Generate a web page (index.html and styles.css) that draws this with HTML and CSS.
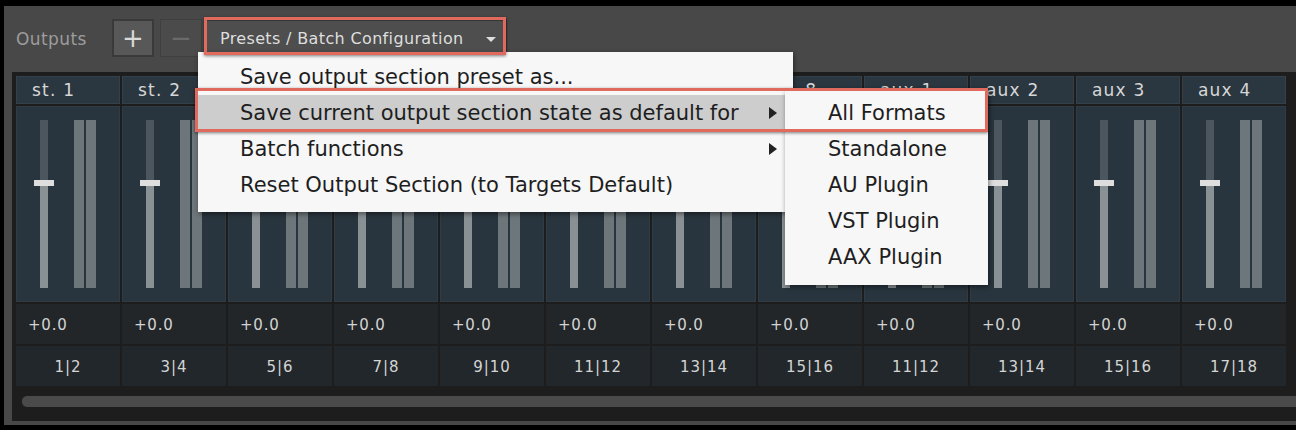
FILE: index.html
```html
<!DOCTYPE html>
<html lang="en">
<head>
    <meta charset="UTF-8">
    <meta name="viewport" content="width=device-width, initial-scale=1.0">
    <title>Outputs</title>
    <link rel="stylesheet" href="styles.css">
</head>
<body>
    <div class="window">
        <div class="panel">
            <div class="toolbar">
                <span class="toolbarLabel">Outputs</span>
                <div class="toolButton add">+</div>
                <div class="toolButton remove">&minus;</div>
                <div class="dropdown">Presets / Batch Configuration <span class="caret"></span></div>
            </div>

            <div class="mixer">
                <div class="strips">
                    <div class="strip">
                        <div class="stripName">st. 1</div>
                        <div class="stripBody">
                            <div class="fader"><div class="faderTop"></div><div class="faderCap"></div><div class="faderBottom"></div></div>
                            <div class="meters"><span></span><span></span></div>
                        </div>
                        <div class="stripLevel">+0.0</div>
                        <div class="stripChannels">1|2</div>
                    </div>
                    <div class="strip">
                        <div class="stripName">st. 2</div>
                        <div class="stripBody">
                            <div class="fader"><div class="faderTop"></div><div class="faderCap"></div><div class="faderBottom"></div></div>
                            <div class="meters"><span></span><span></span></div>
                        </div>
                        <div class="stripLevel">+0.0</div>
                        <div class="stripChannels">3|4</div>
                    </div>
                    <div class="strip">
                        <div class="stripName">st. 3</div>
                        <div class="stripBody">
                            <div class="fader"><div class="faderTop"></div><div class="faderCap"></div><div class="faderBottom"></div></div>
                            <div class="meters"><span></span><span></span></div>
                        </div>
                        <div class="stripLevel">+0.0</div>
                        <div class="stripChannels">5|6</div>
                    </div>
                    <div class="strip">
                        <div class="stripName">st. 4</div>
                        <div class="stripBody">
                            <div class="fader"><div class="faderTop"></div><div class="faderCap"></div><div class="faderBottom"></div></div>
                            <div class="meters"><span></span><span></span></div>
                        </div>
                        <div class="stripLevel">+0.0</div>
                        <div class="stripChannels">7|8</div>
                    </div>
                    <div class="strip">
                        <div class="stripName">st. 5</div>
                        <div class="stripBody">
                            <div class="fader"><div class="faderTop"></div><div class="faderCap"></div><div class="faderBottom"></div></div>
                            <div class="meters"><span></span><span></span></div>
                        </div>
                        <div class="stripLevel">+0.0</div>
                        <div class="stripChannels">9|10</div>
                    </div>
                    <div class="strip">
                        <div class="stripName">st. 6</div>
                        <div class="stripBody">
                            <div class="fader"><div class="faderTop"></div><div class="faderCap"></div><div class="faderBottom"></div></div>
                            <div class="meters"><span></span><span></span></div>
                        </div>
                        <div class="stripLevel">+0.0</div>
                        <div class="stripChannels">11|12</div>
                    </div>
                    <div class="strip">
                        <div class="stripName">st. 7</div>
                        <div class="stripBody">
                            <div class="fader"><div class="faderTop"></div><div class="faderCap"></div><div class="faderBottom"></div></div>
                            <div class="meters"><span></span><span></span></div>
                        </div>
                        <div class="stripLevel">+0.0</div>
                        <div class="stripChannels">13|14</div>
                    </div>
                    <div class="strip">
                        <div class="stripName">st. 8</div>
                        <div class="stripBody">
                            <div class="fader"><div class="faderTop"></div><div class="faderCap"></div><div class="faderBottom"></div></div>
                            <div class="meters"><span></span><span></span></div>
                        </div>
                        <div class="stripLevel">+0.0</div>
                        <div class="stripChannels">15|16</div>
                    </div>
                    <div class="strip">
                        <div class="stripName">aux 1</div>
                        <div class="stripBody">
                            <div class="fader"><div class="faderTop"></div><div class="faderCap"></div><div class="faderBottom"></div></div>
                            <div class="meters"><span></span><span></span></div>
                        </div>
                        <div class="stripLevel">+0.0</div>
                        <div class="stripChannels">11|12</div>
                    </div>
                    <div class="strip">
                        <div class="stripName">aux 2</div>
                        <div class="stripBody">
                            <div class="fader"><div class="faderTop"></div><div class="faderCap"></div><div class="faderBottom"></div></div>
                            <div class="meters"><span></span><span></span></div>
                        </div>
                        <div class="stripLevel">+0.0</div>
                        <div class="stripChannels">13|14</div>
                    </div>
                    <div class="strip">
                        <div class="stripName">aux 3</div>
                        <div class="stripBody">
                            <div class="fader"><div class="faderTop"></div><div class="faderCap"></div><div class="faderBottom"></div></div>
                            <div class="meters"><span></span><span></span></div>
                        </div>
                        <div class="stripLevel">+0.0</div>
                        <div class="stripChannels">15|16</div>
                    </div>
                    <div class="strip">
                        <div class="stripName">aux 4</div>
                        <div class="stripBody">
                            <div class="fader"><div class="faderTop"></div><div class="faderCap"></div><div class="faderBottom"></div></div>
                            <div class="meters"><span></span><span></span></div>
                        </div>
                        <div class="stripLevel">+0.0</div>
                        <div class="stripChannels">17|18</div>
                    </div>
                </div>
                <div class="scrollbar"><div class="scrollThumb"></div></div>
            </div>
        </div>

        <!-- popup menu opened from the presets dropdown -->
        <div class="menu">
            <div class="menuItem">Save output section preset as...</div>
            <div class="menuItem active">Save current output section state as default for <span class="arrow"></span></div>
            <div class="menuItem">Batch functions <span class="arrow"></span></div>
            <div class="menuItem">Reset Output Section (to Targets Default)</div>
        </div>
        <div class="submenu">
            <div class="menuItem">All Formats</div>
            <div class="menuItem">Standalone</div>
            <div class="menuItem">AU Plugin</div>
            <div class="menuItem">VST Plugin</div>
            <div class="menuItem">AAX Plugin</div>
        </div>

        <!-- callout frames -->
        <div class="callout calloutDropdown"></div>
        <div class="callout calloutMenu"></div>
    </div>
</body>
</html>
```

FILE: styles.css
```css
body {
    margin: 0;
    background-color: #000;
    font-family: "DejaVu Sans", sans-serif;
}
.window {
    position: relative;
    width: 1296px;
    height: 430px;
    overflow: hidden;
    padding-top: 6px;
    box-sizing: border-box;
}
.panel {
    margin-left: 4px;
    height: 419px;
    background-color: #484848;
    display: flex;
    flex-direction: column;
}

/* toolbar */
.toolbar {
    height: 66px;
    display: flex;
    align-items: center;
    padding-left: 12px;
    padding-bottom: 2px;
    box-sizing: border-box;
}
.toolbarLabel {
    color: #9c9c9c;
    font-size: 17px;
    letter-spacing: 0.4px;
    width: 96px;
    margin-top: 2px;
}
.toolButton {
    width: 42px;
    height: 38px;
    box-sizing: border-box;
    display: flex;
    align-items: center;
    justify-content: center;
    font-size: 26px;
    line-height: 1;
}
.toolButton.add {
    background-color: #585858;
    border: 2px solid #3a3a3a;
    color: #d8d8d8;
}
.toolButton.remove {
    margin-left: 6px;
    background-color: #4b4b4b;
    border: 1px solid #404040;
    color: #6a6a6a;
}
.dropdown {
    margin-left: 3px;
    width: 302px;
    height: 38px;
    box-sizing: border-box;
    border: 2px solid #353535;
    background-color: #4e4e4e;
    color: #dedede;
    font-size: 16px;
    letter-spacing: 0.35px;
    display: flex;
    align-items: center;
    padding-left: 13px;
}
.caret {
    margin-left: 22px;
    width: 0;
    height: 0;
    border-left: 5px solid transparent;
    border-right: 5px solid transparent;
    border-top: 5px solid #dedede;
    margin-top: 3px;
}

/* mixer area */
.mixer {
    margin-left: 8px;
    flex: 1;
    background-color: #1d1d1d;
    padding: 4px 0 0 4px;
    margin-bottom: 4px;
}
.strips {
    display: flex;
    gap: 2px;
}
.strip {
    width: 104px;
    display: flex;
    flex-direction: column;
    gap: 2px;
    flex-shrink: 0;
}
.stripName {
    height: 28px;
    box-sizing: border-box;
    background-color: #2b3740;
    border: 1px solid #34404a;
    color: #d6d6d6;
    font-size: 17px;
    letter-spacing: 1.2px;
    padding-left: 15px;
    line-height: 26px;
}
.stripBody {
    height: 196px;
    box-sizing: border-box;
    background-color: #29353e;
    border: 1px solid #303c45;
    display: flex;
    padding: 13px 0 0 17px;
    gap: 20px;
}
.fader {
    width: 20px;
    display: flex;
    flex-direction: column;
    align-items: center;
}
.faderTop {
    width: 8px;
    height: 60px;
    background-color: #4b565f;
}
.faderCap {
    width: 20px;
    height: 6px;
    background-color: #dedede;
}
.faderBottom {
    width: 8px;
    height: 102px;
    background-color: #8a9195;
}
.meters {
    display: flex;
    gap: 2px;
}
.meters span {
    width: 10px;
    height: 168px;
    background-color: #6d767a;
}
.stripLevel {
    height: 40px;
    background-color: #222629;
    color: #d4d4d4;
    font-size: 15px;
    letter-spacing: 0.8px;
    line-height: 42px;
    padding-left: 12px;
}
.stripChannels {
    height: 40px;
    background-color: #22272b;
    color: #d4d4d4;
    font-size: 15px;
    letter-spacing: 1px;
    line-height: 42px;
    text-align: center;
}
.scrollbar {
    margin-top: 10px;
    padding-left: 6px;
}
.scrollThumb {
    height: 11px;
    background-color: #4a4a4a;
    border-radius: 5px 0 0 5px;
}

/* popup menu */
.menu, .submenu {
    position: absolute;
    background-color: #f7f7f7;
    color: #1e1e1e;
    font-size: 21px;
    box-shadow: 1px 2px 5px rgba(0, 0, 0, 0.45);
}
.menu {
    left: 198px;
    top: 52px;
    width: 595px;
    padding: 7px 0 9px 0;
}
.submenu {
    left: 785px;
    top: 90px;
    width: 203px;
    padding: 5px 0 10px 0;
}
.menuItem {
    height: 36px;
    line-height: 36px;
    padding-left: 42px;
    position: relative;
    white-space: nowrap;
}
.submenu .menuItem {
    padding-left: 43px;
}
.menuItem.active {
    background-color: #cdcdcd;
}
.arrow {
    position: absolute;
    left: 571px;
    top: 12px;
    width: 0;
    height: 0;
    border-top: 6px solid transparent;
    border-bottom: 6px solid transparent;
    border-left: 8px solid #222;
}

/* red callout frames */
.callout {
    position: absolute;
    border: 3px solid #e06a5e;
    box-shadow: 0 1px 3px rgba(0, 0, 0, 0.5);
}
.calloutDropdown {
    left: 204px;
    top: 17px;
    width: 296px;
    height: 32px;
}
.calloutMenu {
    left: 195px;
    top: 88px;
    width: 787px;
    height: 38px;
}
```
